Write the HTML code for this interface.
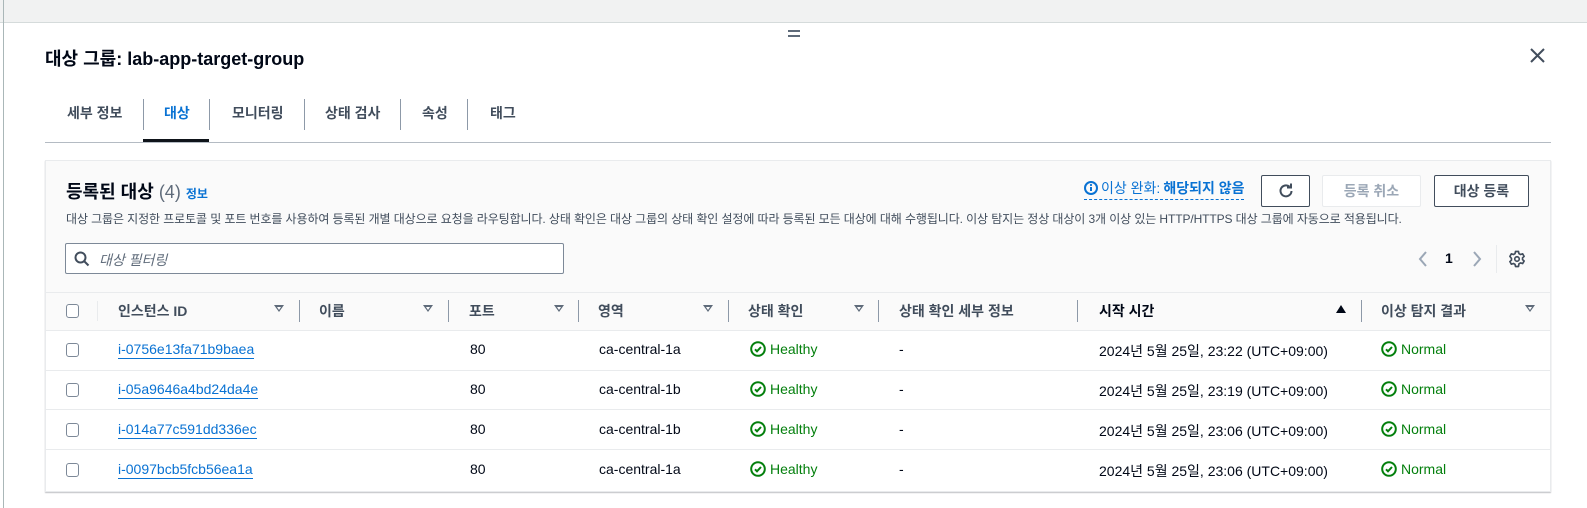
<!DOCTYPE html>
<html><head><meta charset="utf-8">
<style>
*{box-sizing:border-box;margin:0;padding:0}
body{width:1587px;height:508px;overflow:hidden;background:#fff;font-family:"Liberation Sans","Noto Sans CJK KR",sans-serif;color:#000716;position:relative}
.a{position:absolute;white-space:nowrap}
.top{left:0;top:0;width:1587px;height:23px;background:#f1f2f2;border-bottom:1px solid #d5dbdb}
.lb{left:3px;top:0;width:1px;height:508px;background:#aab7b8}
.tab{top:103px;font-size:14px;font-weight:bold;color:#414d5c}
.tsep{top:99px;width:1px;height:31px;background:#8d99a8}
.panel{left:45px;top:160px;width:1506px;height:332px;background:#fafafa;border:1px solid #e9ebed;box-shadow:0 1px 1px rgba(0,7,22,.25)}
.btn{height:32px;border:1px solid #414d5c;border-radius:2px;font-size:14px;font-weight:bold;color:#414d5c;display:flex;align-items:center;justify-content:center;background:#fff}
.hd{top:301px;font-size:14px;font-weight:bold;color:#414d5c}
.fi{top:305px;width:0;height:0;border-left:5px solid transparent;border-right:5px solid transparent;border-top:7px solid #5f6b7a}
.fi::after{content:"";position:absolute;left:-2px;top:-5px;border-left:2px solid transparent;border-right:2px solid transparent;border-top:3px solid #fff}
.hs{top:300px;width:1px;height:22px;background:#8d99a8}
.row{left:46px;width:1504px;height:40px;background:#fff;border-top:1px solid #e9ebed}
.cb{left:66px;width:13px;height:14px;border:1.5px solid #7d8998;border-radius:3px;background:#fff}
.c{font-size:14px;color:#000716}
.lk{color:#0972d3;border-bottom:1.5px solid #0972d3;padding-bottom:1px}
.ok{color:#037f0c;display:flex;align-items:center;gap:4px;font-size:14px}
</style></head><body>
<div class="a top"></div>
<div class="a lb"></div>
<div class="a" style="left:788px;top:30px;width:12px;height:2px;background:#5f6b7a"></div>
<div class="a" style="left:788px;top:35px;width:12px;height:2px;background:#5f6b7a"></div>
<div class="a" style="left:45px;top:45px;font-size:18px;font-weight:bold;color:#000716">대상 그룹: lab-app-target-group</div>
<svg class="a" style="left:1530px;top:48px" width="15" height="15" viewBox="0 0 15 15"><path d="M1 1L14 14M14 1L1 14" stroke="#414d5c" stroke-width="2"/></svg>

<div class="a tab" style="left:67px">세부 정보</div>
<div class="a tsep" style="left:143px"></div>
<div class="a tab" style="left:164px;color:#0972d3">대상</div>
<div class="a tsep" style="left:209px"></div>
<div class="a tab" style="left:232px">모니터링</div>
<div class="a tsep" style="left:304px"></div>
<div class="a tab" style="left:325px">상태 검사</div>
<div class="a tsep" style="left:400px"></div>
<div class="a tab" style="left:422px">속성</div>
<div class="a tsep" style="left:467px"></div>
<div class="a tab" style="left:490px">태그</div>
<div class="a" style="left:143px;top:139px;width:66px;height:4px;background:#0f141a"></div>
<div class="a" style="left:45px;top:142px;width:1506px;height:1px;background:#b4bbc3"></div>

<div class="a panel"></div>
<div class="a" style="left:66px;top:178px;font-size:18px;font-weight:bold">등록된 대상 <span style="font-weight:normal;color:#5f6b7a">(4)</span> <span style="font-size:12px;color:#0972d3;font-weight:bold">정보</span></div>
<div class="a" style="left:66px;top:210px;font-size:12px;color:#414d5c;letter-spacing:-0.1px">대상 그룹은 지정한 프로토콜 및 포트 번호를 사용하여 등록된 개별 대상으로 요청을 라우팅합니다. 상태 확인은 대상 그룹의 상태 확인 설정에 따라 등록된 모든 대상에 대해 수행됩니다. 이상 탐지는 정상 대상이 3개 이상 있는 HTTP/HTTPS 대상 그룹에 자동으로 적용됩니다.</div>
<div class="a" style="left:1084px;top:178px;font-size:14px;color:#0972d3;border-bottom:1.5px dashed #0972d3;padding-bottom:1px;display:flex;align-items:center;gap:3px">
<svg width="14" height="14" viewBox="0 0 14 14"><circle cx="7" cy="7" r="6" fill="none" stroke="#0972d3" stroke-width="2"/><path d="M7 6v4" stroke="#0972d3" stroke-width="2"/><circle cx="7" cy="4" r="1.1" fill="#0972d3"/></svg>이상 완화: <b>해당되지 않음</b></div>
<div class="a btn" style="left:1261px;top:175px;width:49px"><svg width="16" height="16" viewBox="0 0 16 16"><path d="M13.5 8A5.5 5.5 0 1 1 11.5 3.6" fill="none" stroke="#414d5c" stroke-width="2"/><path d="M9 4.5h4v-4" fill="none" stroke="#414d5c" stroke-width="2"/></svg></div>
<div class="a btn" style="left:1322px;top:175px;width:99px;border-color:#e9ebed;color:#9ba7b6">등록 취소</div>
<div class="a btn" style="left:1434px;top:175px;width:95px">대상 등록</div>

<div class="a" style="left:65px;top:243px;width:499px;height:31px;border:1px solid #7d8998;border-radius:2px;background:#fff"></div>
<svg class="a" style="left:74px;top:251px" width="16" height="16" viewBox="0 0 16 16"><circle cx="6.5" cy="6.5" r="5" fill="none" stroke="#414d5c" stroke-width="2"/><path d="M10 10l4.5 4.5" stroke="#414d5c" stroke-width="2"/></svg>
<div class="a" style="left:99px;top:250px;font-size:14px;font-style:italic;color:#5f6b7a">대상 필터링</div>
<svg class="a" style="left:1417px;top:251px" width="12" height="16" viewBox="0 0 12 16"><path d="M9 1L3 8l6 7" fill="none" stroke="#9ba7b6" stroke-width="2"/></svg>
<div class="a" style="left:1445px;top:250px;font-size:14px;font-weight:bold">1</div>
<svg class="a" style="left:1471px;top:251px" width="12" height="16" viewBox="0 0 12 16"><path d="M3 1l6 7-6 7" fill="none" stroke="#9ba7b6" stroke-width="2"/></svg>
<div class="a" style="left:1496px;top:245px;width:1px;height:28px;background:#e9ebed"></div>
<svg class="a" style="left:1508px;top:250px" width="18" height="18" viewBox="0 0 24 24"><path d="M10 2h4l.6 2.8 2.2 1.2 2.7-.9 2 3.4-2.1 1.9v2.4l2.1 1.9-2 3.4-2.7-.9-2.2 1.2L14 22h-4l-.6-2.8-2.2-1.2-2.7.9-2-3.4 2.1-1.9v-2.4L2.5 8.5l2-3.4 2.7.9 2.2-1.2z" fill="none" stroke="#414d5c" stroke-width="2.2" stroke-linejoin="round"/><circle cx="12" cy="12" r="3" fill="none" stroke="#414d5c" stroke-width="2.2"/></svg>

<div class="a" style="left:46px;top:292px;width:1504px;height:1px;background:#e9ebed"></div>
<div class="a cb" style="top:304px"></div>
<div class="a" style="left:97px;top:301px;width:1px;height:20px;background:#e9ebed"></div>
<div class="a hd" style="left:118px">인스턴스 ID</div><div class="a fi" style="left:274px"></div><div class="a hs" style="left:299px"></div>
<div class="a hd" style="left:319px">이름</div><div class="a fi" style="left:423px"></div><div class="a hs" style="left:448px"></div>
<div class="a hd" style="left:469px">포트</div><div class="a fi" style="left:554px"></div><div class="a hs" style="left:578px"></div>
<div class="a hd" style="left:598px">영역</div><div class="a fi" style="left:703px"></div><div class="a hs" style="left:728px"></div>
<div class="a hd" style="left:748px">상태 확인</div><div class="a fi" style="left:854px"></div><div class="a hs" style="left:878px"></div>
<div class="a hd" style="left:899px">상태 확인 세부 정보</div><div class="a hs" style="left:1077px"></div>
<div class="a hd" style="left:1099px;color:#000716">시작 시간</div>
<div class="a" style="left:1336px;top:305px;border-left:5px solid transparent;border-right:5px solid transparent;border-bottom:8px solid #000716"></div>
<div class="a hs" style="left:1361px"></div>
<div class="a hd" style="left:1381px">이상 탐지 결과</div><div class="a fi" style="left:1525px"></div>

<div class="a row" style="top:330px"></div>
<div class="a row" style="top:370px"></div>
<div class="a row" style="top:409px"></div>
<div class="a row" style="top:449px;height:42px"></div>

<div class="a cb" style="top:343px"></div>
<div class="a c lk" style="left:118px;top:341px">i-0756e13fa71b9baea</div>
<div class="a c" style="left:470px;top:341px">80</div>
<div class="a c" style="left:599px;top:341px">ca-central-1a</div>
<div class="a ok" style="left:750px;top:341px"><svg width="16" height="16" viewBox="0 0 16 16"><circle cx="8" cy="8" r="6.8" fill="none" stroke="#037f0c" stroke-width="2"/><path d="M5 8.3l2 2 4-4.3" fill="none" stroke="#037f0c" stroke-width="2"/></svg>Healthy</div>
<div class="a c" style="left:899px;top:341px">-</div>
<div class="a c" style="left:1099px;top:341px">2024년 5월 25일, 23:22 (UTC+09:00)</div>
<div class="a ok" style="left:1381px;top:341px"><svg width="16" height="16" viewBox="0 0 16 16"><circle cx="8" cy="8" r="6.8" fill="none" stroke="#037f0c" stroke-width="2"/><path d="M5 8.3l2 2 4-4.3" fill="none" stroke="#037f0c" stroke-width="2"/></svg>Normal</div>

<div class="a cb" style="top:383px"></div>
<div class="a c lk" style="left:118px;top:381px">i-05a9646a4bd24da4e</div>
<div class="a c" style="left:470px;top:381px">80</div>
<div class="a c" style="left:599px;top:381px">ca-central-1b</div>
<div class="a ok" style="left:750px;top:381px"><svg width="16" height="16" viewBox="0 0 16 16"><circle cx="8" cy="8" r="6.8" fill="none" stroke="#037f0c" stroke-width="2"/><path d="M5 8.3l2 2 4-4.3" fill="none" stroke="#037f0c" stroke-width="2"/></svg>Healthy</div>
<div class="a c" style="left:899px;top:381px">-</div>
<div class="a c" style="left:1099px;top:381px">2024년 5월 25일, 23:19 (UTC+09:00)</div>
<div class="a ok" style="left:1381px;top:381px"><svg width="16" height="16" viewBox="0 0 16 16"><circle cx="8" cy="8" r="6.8" fill="none" stroke="#037f0c" stroke-width="2"/><path d="M5 8.3l2 2 4-4.3" fill="none" stroke="#037f0c" stroke-width="2"/></svg>Normal</div>

<div class="a cb" style="top:423px"></div>
<div class="a c lk" style="left:118px;top:421px">i-014a77c591dd336ec</div>
<div class="a c" style="left:470px;top:421px">80</div>
<div class="a c" style="left:599px;top:421px">ca-central-1b</div>
<div class="a ok" style="left:750px;top:421px"><svg width="16" height="16" viewBox="0 0 16 16"><circle cx="8" cy="8" r="6.8" fill="none" stroke="#037f0c" stroke-width="2"/><path d="M5 8.3l2 2 4-4.3" fill="none" stroke="#037f0c" stroke-width="2"/></svg>Healthy</div>
<div class="a c" style="left:899px;top:421px">-</div>
<div class="a c" style="left:1099px;top:421px">2024년 5월 25일, 23:06 (UTC+09:00)</div>
<div class="a ok" style="left:1381px;top:421px"><svg width="16" height="16" viewBox="0 0 16 16"><circle cx="8" cy="8" r="6.8" fill="none" stroke="#037f0c" stroke-width="2"/><path d="M5 8.3l2 2 4-4.3" fill="none" stroke="#037f0c" stroke-width="2"/></svg>Normal</div>

<div class="a cb" style="top:463px"></div>
<div class="a c lk" style="left:118px;top:461px">i-0097bcb5fcb56ea1a</div>
<div class="a c" style="left:470px;top:461px">80</div>
<div class="a c" style="left:599px;top:461px">ca-central-1a</div>
<div class="a ok" style="left:750px;top:461px"><svg width="16" height="16" viewBox="0 0 16 16"><circle cx="8" cy="8" r="6.8" fill="none" stroke="#037f0c" stroke-width="2"/><path d="M5 8.3l2 2 4-4.3" fill="none" stroke="#037f0c" stroke-width="2"/></svg>Healthy</div>
<div class="a c" style="left:899px;top:461px">-</div>
<div class="a c" style="left:1099px;top:461px">2024년 5월 25일, 23:06 (UTC+09:00)</div>
<div class="a ok" style="left:1381px;top:461px"><svg width="16" height="16" viewBox="0 0 16 16"><circle cx="8" cy="8" r="6.8" fill="none" stroke="#037f0c" stroke-width="2"/><path d="M5 8.3l2 2 4-4.3" fill="none" stroke="#037f0c" stroke-width="2"/></svg>Normal</div>
</body></html>
